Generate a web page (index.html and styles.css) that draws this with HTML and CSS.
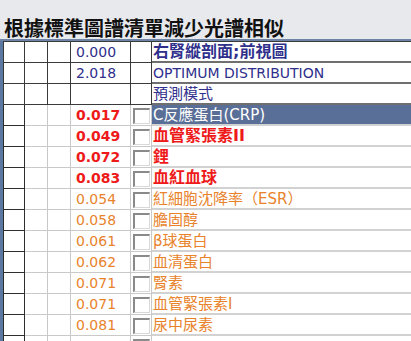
FILE: index.html
```html
<!DOCTYPE html>
<html>
<head>
<meta charset="utf-8">
<link rel="stylesheet" href="styles.css">
</head>
<body>
<div class="title">根據標準圖譜清單減少光譜相似</div>
<div class="rule"></div>
<div class="grid">
  <div class="row top">
    <div class="c c1"></div><div class="c c2"></div><div class="c c3"></div>
    <div class="c c4 navy">0.000</div><div class="c c5"></div>
    <div class="c c6 navy bold big">右腎縱剖面;前視圖</div>
  </div>
  <div class="row top">
    <div class="c c1"></div><div class="c c2"></div><div class="c c3"></div>
    <div class="c c4 navy">2.018</div><div class="c c5"></div>
    <div class="c c6 navy latin">OPTIMUM DISTRIBUTION</div>
  </div>
  <div class="row top">
    <div class="c c1"></div><div class="c c2"></div><div class="c c3"></div>
    <div class="c c4 navy"></div><div class="c c5"></div>
    <div class="c c6 navy">預測模式</div>
  </div>
  <div class="row">
    <div class="c c1"></div><div class="c c2"></div><div class="c c3"></div>
    <div class="c c4 red bold">0.017</div><div class="c c5"><span class="box"></span></div>
    <div class="c c6 sel">C反應蛋白(CRP)</div>
  </div>
  <div class="row">
    <div class="c c1"></div><div class="c c2"></div><div class="c c3"></div>
    <div class="c c4 red bold">0.049</div><div class="c c5"><span class="box"></span></div>
    <div class="c c6 red bold big">血管緊張素II</div>
  </div>
  <div class="row">
    <div class="c c1"></div><div class="c c2"></div><div class="c c3"></div>
    <div class="c c4 red bold">0.072</div><div class="c c5"><span class="box"></span></div>
    <div class="c c6 red bold big">鋰</div>
  </div>
  <div class="row">
    <div class="c c1"></div><div class="c c2"></div><div class="c c3"></div>
    <div class="c c4 red bold">0.083</div><div class="c c5"><span class="box"></span></div>
    <div class="c c6 red bold big">血紅血球</div>
  </div>
  <div class="row">
    <div class="c c1"></div><div class="c c2"></div><div class="c c3"></div>
    <div class="c c4 orange">0.054</div><div class="c c5"><span class="box"></span></div>
    <div class="c c6 orange">紅細胞沈降率（ESR）</div>
  </div>
  <div class="row">
    <div class="c c1"></div><div class="c c2"></div><div class="c c3"></div>
    <div class="c c4 orange">0.058</div><div class="c c5"><span class="box"></span></div>
    <div class="c c6 orange">膽固醇</div>
  </div>
  <div class="row">
    <div class="c c1"></div><div class="c c2"></div><div class="c c3"></div>
    <div class="c c4 orange">0.061</div><div class="c c5"><span class="box"></span></div>
    <div class="c c6 orange">β球蛋白</div>
  </div>
  <div class="row">
    <div class="c c1"></div><div class="c c2"></div><div class="c c3"></div>
    <div class="c c4 orange">0.062</div><div class="c c5"><span class="box"></span></div>
    <div class="c c6 orange">血清蛋白</div>
  </div>
  <div class="row">
    <div class="c c1"></div><div class="c c2"></div><div class="c c3"></div>
    <div class="c c4 orange">0.071</div><div class="c c5"><span class="box"></span></div>
    <div class="c c6 orange">腎素</div>
  </div>
  <div class="row">
    <div class="c c1"></div><div class="c c2"></div><div class="c c3"></div>
    <div class="c c4 orange">0.071</div><div class="c c5"><span class="box"></span></div>
    <div class="c c6 orange">血管緊張素I</div>
  </div>
  <div class="row">
    <div class="c c1"></div><div class="c c2"></div><div class="c c3"></div>
    <div class="c c4 orange">0.081</div><div class="c c5"><span class="box"></span></div>
    <div class="c c6 orange">尿中尿素</div>
  </div>
  <div class="row">
    <div class="c c1"></div><div class="c c2"></div><div class="c c3"></div>
    <div class="c c4 orange"></div><div class="c c5"><span class="box"></span></div>
    <div class="c c6 orange"></div>
  </div>
</div>
</body>
</html>
```
FILE: styles.css
```css
html, body {
  margin: 0;
  padding: 0;
  overflow: hidden;
  background: #e7e9ed;
  width: 411px;
  height: 341px;
}
.title {
  height: 39px;
  box-sizing: border-box;
  padding: 17px 0 0 4px;
  font-family: "Noto Sans CJK TC", sans-serif;
  font-weight: bold;
  font-size: 20px;
  line-height: 22px;
  color: #111;
  white-space: nowrap;
}
.rule {
  height: 2px;
  background: #6d84a6;
}
.grid {
  border-left: 3px solid #5b78a0;
  background: #fff;
}
.row {
  display: flex;
  height: 21px;
}
.c {
  box-sizing: border-box;
  height: 21px;
  border-bottom: 1px solid #c9c9c9;
  border-right: 1px solid #c9c9c9;
  font-family: "DejaVu Sans", "Noto Sans CJK TC", sans-serif;
  font-size: 14px;
  line-height: 20px;
  white-space: nowrap;
  overflow: hidden;
}
.row:first-child .c { border-top: 1px solid #3a3a3a; height: 22px; }
.row:first-child { height: 22px; }
.c1 {
  width: 22px;
  border-left: 1px solid #2e2e2e;
  border-right-color: #2e2e2e;
  border-bottom-color: #2e2e2e;
}
.c2 { width: 23px; }
.c3 { width: 23px; }
.c4 { width: 60px; padding-left: 5px; }
.c5 { width: 21px; padding: 3px 0 0 2px; }
.c6 {
  flex: 1;
  border-right: none;
  border-bottom: 2px solid #d2d2d2;
  padding-left: 1px;
  font-size: 15px;
}
.top .c { border-color: #3a3a3a; }
.top .c6 { border-bottom: 2px solid #6f6f6f; }
.box {
  display: block;
  width: 17px;
  height: 16px;
  box-sizing: border-box;
  background: #fff;
  border-top: 2px solid #8a8a8a;
  border-left: 2px solid #8a8a8a;
  border-right: 1px solid #d8d8d8;
  border-bottom: 1px solid #d8d8d8;
}
.navy { color: #2f2f8c; }
.red { color: #ee1a1a; }
.orange { color: #e8832c; }
.bold { font-weight: bold; }
.big { font-size: 16px; }
.latin { font-size: 14px; }
.sel {
  background: #5a6f97;
  color: #fff;
}
```
